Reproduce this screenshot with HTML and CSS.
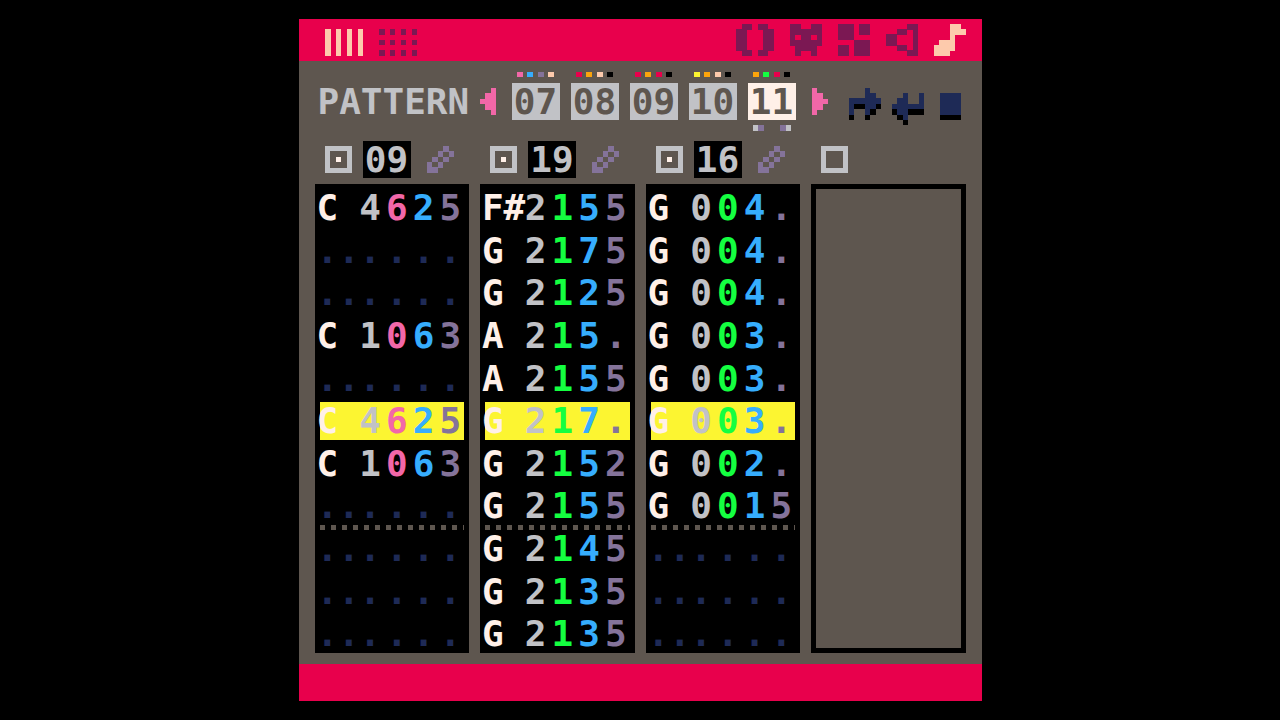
FILE: index.html
```
<!DOCTYPE html>
<html lang="en">
<head>
  <meta charset="UTF-8">
  <meta name="viewport" content="width=device-width, initial-scale=1.0">
  <title>Music Editor</title>
  <link rel="stylesheet" href="styles.css">
</head>
<body>

  <main class="console">
    <header class="topbar">
      <button class="icon-btn peach" aria-label="Tracker view">
        <svg class="w7 h5" viewBox="0 0 7 5"><path d="M0 .5h1m1 0h1m1 0h1m1 0h1M0 1.5h1m1 0h1m1 0h1m1 0h1M0 2.5h1m1 0h1m1 0h1m1 0h1M0 3.5h1m1 0h1m1 0h1m1 0h1M0 4.5h1m1 0h1m1 0h1m1 0h1"/></svg>
      </button>
      <button class="icon-btn plum" aria-label="Grid view">
        <svg class="w7 h5" viewBox="0 0 7 5"><path d="M0 .5h1m1 0h1m1 0h1m1 0h1M0 2.5h1m1 0h1m1 0h1m1 0h1M0 4.5h1m1 0h1m1 0h1m1 0h1"/></svg>
      </button>
      <nav class="editors">
        <button class="icon-btn plum" aria-label="Code editor">
          <svg class="w7 h6" viewBox="0 0 7 6"><path d="M1 .5h2m1 0h2M0 1.5h2m3 0h2M0 2.5h2m3 0h2M0 3.5h2m3 0h2M0 4.5h2m3 0h2M1 5.5h2m1 0h2"/></svg>
        </button>
        <button class="icon-btn plum" aria-label="Sprite editor">
          <svg class="w6 h6" viewBox="0 0 6 6"><path d="M0 .5h2m2 0h2M0 1.5h6M0 2.5h1m1 0h2m1 0h1M0 3.5h6M1 4.5h4M1 5.5h1m2 0h1"/></svg>
        </button>
        <button class="icon-btn plum" aria-label="Map editor">
          <svg class="w6 h6" viewBox="0 0 6 6"><path d="M0 .5h3m1 0h2M0 1.5h3m1 0h2M0 2.5h3M3 3.5h3M0 4.5h2m1 0h3M0 5.5h2m1 0h3"/></svg>
        </button>
        <button class="icon-btn plum" aria-label="Sound editor">
          <svg class="w6 h6" viewBox="0 0 6 6"><path d="M4 .5h2M2 1.5h2m1 0h1M0 2.5h2m3 0h1M0 3.5h2m3 0h1M2 4.5h2m1 0h1M4 5.5h2"/></svg>
        </button>
        <button class="icon-btn peach" aria-label="Music editor">
          <svg class="w6 h6" viewBox="0 0 6 6"><path d="M3 .5h2M3 1.5h3M3 2.5h1M1 3.5h3M0 4.5h4M0 5.5h3"/></svg>
        </button>
      </nav>
    </header>

    <section class="patterns">
      <h1 class="label">PATTERN</h1>
      <button class="icon-btn pink" aria-label="Previous patterns">
        <svg class="w3 h5" viewBox="0 0 3 5"><path d="M2 .5h1M1 1.5h2M0 2.5h3M1 3.5h2M2 4.5h1"/></svg>
      </button>
      <div class="pages" id="pages"></div>
      <button class="icon-btn pink" aria-label="Next patterns">
        <svg class="w3 h5" viewBox="0 0 3 5"><path d="M0 .5h1M0 1.5h2M0 2.5h3M0 3.5h2M0 4.5h1"/></svg>
      </button>
      <div class="flow">
        <button class="icon-btn navy" aria-label="Loop start">
          <svg class="w6 h7" viewBox="0 0 6 7"><path class="shade" d="M1 3.5h2m2 0h1M4 4.5h1M0 5.5h1m2 0h1"/><path d="M3 .5h1M3 1.5h2M0 2.5h6M0 3.5h1m2 0h2M0 4.5h1m2 0h1"/></svg>
        </button>
        <button class="icon-btn navy" aria-label="Loop back">
          <svg class="w6 h7" viewBox="0 0 6 7"><path class="shade" d="M0 4.5h1m2 0h3M1 5.5h1M2 6.5h1"/><path d="M2 1.5h1m2 0h1M1 2.5h2m2 0h1M0 3.5h6M1 4.5h2M2 5.5h1"/></svg>
        </button>
        <button class="icon-btn navy stop" aria-label="Stop">
          <svg class="w4 h7" viewBox="0 0 4 7"><path class="shade" d="M0 5.5h4"/><path d="M0 1.5h4M0 2.5h4M0 3.5h4M0 4.5h4"/></svg>
        </button>
      </div>
    </section>

    <section class="channels" id="channels"></section>

    <footer class="bottombar"></footer>
  </main>

  <script>
    const pages = [
      { id: '07', dots: ['pink', 'blue', 'lavender', 'peach'] },
      { id: '08', dots: ['red', 'orange', 'peach', 'black'] },
      { id: '09', dots: ['red', 'orange', 'red', 'black'] },
      { id: '10', dots: ['yellow', 'orange', 'peach', 'black'] },
      { id: '11', dots: ['orange', 'green', 'red', 'black'], current: true }
    ];

    // note, sharp, octave, instrument, volume, effect
    const channels = [
      { sfx: '09', custom: true, rows: ['C 4625', '......', '......', 'C 1063', '......', 'C 4625', 'C 1063', '......', '......', '......', '......'] },
      { sfx: '19', rows: ['F#2155', 'G 2175', 'G 2125', 'A 215.', 'A 2155', 'G 217.', 'G 2152', 'G 2155', 'G 2145', 'G 2135', 'G 2135'] },
      { sfx: '16', rows: ['G 004.', 'G 004.', 'G 004.', 'G 003.', 'G 003.', 'G 003.', 'G 002.', 'G 0015', '......', '......', '......'] },
      { rows: [] }
    ];
    const playing = 5;
    const barEnd = 7;

    document.getElementById('pages').innerHTML = pages.map(p => `
      <div class="page">
        <div class="dots">${p.dots.map(c => `<i class="dot bg-${c}"></i>`).join('')}</div>
        <button class="page-btn${p.current ? ' current' : ''}">${p.id}</button>
        <div class="marks">${p.current ? '<i class="mark"></i><i class="mark flip"></i>' : ''}</div>
      </div>`).join('');

    const pencil = '<svg class="w5 h5" viewBox="0 0 5 5"><path d="M3 .5h1M2 1.5h1m1 0h1M1 2.5h1m1 0h1M0 3.5h1m1 0h1M0 4.5h2"/></svg>';

    function rowHtml(row, i, channel) {
      const classes = [];
      if (row === '......') classes.push('empty');
      if (i === playing) classes.push('playing');
      if (i === barEnd) classes.push('bar-end');
      if (channel.custom) classes.push('custom');
      return `<tr class="${classes.join(' ')}">${[...row].map(c => `<td>${c}</td>`).join('')}</tr>`;
    }

    document.getElementById('channels').innerHTML = channels.map((ch, n) => `
      <div class="channel">
        <div class="channel-head">
          <input type="checkbox" class="toggle" aria-label="Channel ${n + 1}"${ch.sfx ? ' checked' : ''}>
          ${ch.sfx ? `<input type="text" class="sfx" aria-label="Sound ${n + 1}" value="${ch.sfx}">
          <button class="icon-btn lavender pencil" aria-label="Edit">${pencil}</button>` : ''}
        </div>
        ${ch.sfx ? `<table class="track"><tbody>${ch.rows.map((r, i) => rowHtml(r, i, ch)).join('')}</tbody></table>` : '<div class="track off"></div>'}
      </div>`).join('');
  </script>

</body>
</html>
```

FILE: styles.css
```
:root {
  --black: #000;
  --navy: #1e2a56;
  --plum: #7b1853;
  --stone: #5e564f;
  --silver: #c1c2c6;
  --white: #fff0e8;
  --red: #e8004c;
  --orange: #fba40c;
  --yellow: #fcf531;
  --green: #14ff40;
  --blue: #36adfd;
  --lavender: #84739a;
  --pink: #f267a8;
  --peach: #fdcaac;
}

* {
  box-sizing: border-box;
}

body {
  margin: 0;
  padding: 19px 0;
  background-color: var(--black);
}

body,
button,
input {
  font-family: "DejaVu Sans Mono", monospace;
  font-size: 36px;
  font-weight: bold;
  line-height: 37px;
}

.console {
  max-width: 683px;
  margin: 0 auto;
  background-color: var(--stone);
}

/* icons are drawn as rows of one-unit pixels, slightly overlapped to avoid seams */
svg {
  display: block;
  fill: none;
  stroke: currentColor;
  stroke-width: 1.1;
  shape-rendering: crispEdges;
}

.shade {
  stroke: var(--black);
}

.w3 { width: 16px; }
.w4 { width: 21px; }
.w5 { width: 27px; }
.w6 { width: 32px; }
.w7 { width: 38px; }
.h5 { height: 27px; }
.h6 { height: 32px; }
.h7 { height: 37px; }

.icon-btn {
  padding: 0;
  border: none;
  background: none;
  cursor: pointer;
}

.peach { color: var(--peach); }
.plum { color: var(--plum); }
.pink { color: var(--pink); }
.navy { color: var(--navy); }
.lavender { color: var(--lavender); }

.topbar {
  display: flex;
  align-items: flex-end;
  gap: 16px;
  padding: 5px 16px 5px 26px;
  background-color: var(--red);
}

.editors {
  display: flex;
  gap: 16px;
  margin-left: auto;
}

.patterns {
  display: flex;
  align-items: center;
  gap: 16px;
  padding: 11px 16px 0 19px;
}

.label {
  flex: 1;
  min-width: 0;
  margin: 0;
  color: var(--silver);
  font-size: 36px;
  line-height: 37px;
}

.pages {
  display: flex;
  gap: 11px;
}

.page {
  width: 48px;
}

.dots {
  display: flex;
  justify-content: space-between;
  padding: 0 5px;
}

.dot {
  width: 6px;
  height: 5px;
}

.bg-black { background-color: var(--black); }
.bg-red { background-color: var(--red); }
.bg-orange { background-color: var(--orange); }
.bg-yellow { background-color: var(--yellow); }
.bg-green { background-color: var(--green); }
.bg-blue { background-color: var(--blue); }
.bg-lavender { background-color: var(--lavender); }
.bg-pink { background-color: var(--pink); }
.bg-peach { background-color: var(--peach); }

.page-btn {
  display: block;
  width: 100%;
  margin: 6px 0 5px;
  padding: 0;
  border: none;
  background-color: var(--silver);
  color: var(--stone);
  cursor: pointer;
}

.page-btn.current {
  background-color: var(--white);
}

.marks {
  display: flex;
  justify-content: space-between;
  height: 6px;
  padding: 0 5px;
}

.mark {
  width: 11px;
  background: linear-gradient(to right, var(--silver) 50%, var(--lavender) 50%);
}

.mark.flip {
  background: linear-gradient(to left, var(--silver) 50%, var(--lavender) 50%);
}

.flow {
  display: flex;
  gap: 11px;
  padding: 10px 5px 0;
}

.stop {
  margin-left: 5px;
}

.channels {
  display: grid;
  grid-template-columns: repeat(4, 1fr);
  gap: 11px;
  padding: 10px 16px 11px;
}

.channel {
  display: flex;
  flex-direction: column;
  gap: 6px;
}

.channel-head {
  display: flex;
  align-items: center;
  height: 37px;
  padding-left: 10px;
}

.toggle {
  appearance: none;
  width: 27px;
  height: 27px;
  margin: 0;
  padding: 6px;
  border: 5px solid var(--silver);
}

.toggle:checked {
  background-color: var(--white);
  background-clip: content-box;
}

.sfx {
  width: 48px;
  height: 37px;
  margin: 0 16px 0 11px;
  padding: 0;
  border: none;
  background-color: var(--black);
  color: var(--silver);
  text-align: center;
}

.track {
  display: grid;
  flex: 1;
  min-height: 469px;
  padding: 5px 5px 0;
  background-color: var(--black);
}

.track.off {
  border: 5px solid var(--black);
  background-color: var(--stone);
}

.track tbody {
  display: grid;
  row-gap: 5px;
}

.track tr {
  display: grid;
  grid-template-columns: 4fr 4fr 5fr 5fr 5fr 4fr;
  position: relative;
  color: var(--white);
}

.track td {
  min-width: 0;
  padding: 0;
  text-indent: -3px;
}

.track td:nth-child(3) { color: var(--silver); }
.track td:nth-child(4) { color: var(--green); }
.track td:nth-child(5) { color: var(--blue); }
.track td:nth-child(6) { color: var(--lavender); }

.track .custom td:nth-child(4) {
  color: var(--pink);
}

.track .empty td:nth-child(n) {
  color: var(--navy);
}

.track .playing {
  background-color: var(--yellow);
}

/* dotted rule under the last row of the bar */
.track .bar-end::after {
  content: "";
  position: absolute;
  left: 0;
  right: 0;
  bottom: -5px;
  height: 5px;
  background: repeating-linear-gradient(to right, var(--stone) 0 5px, transparent 5px 11px);
}

.bottombar {
  height: 37px;
  background-color: var(--red);
}
```
